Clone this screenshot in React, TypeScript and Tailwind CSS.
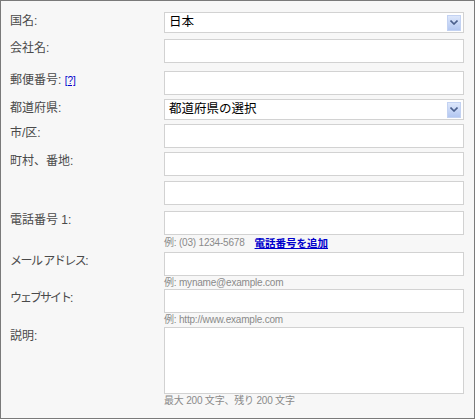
import React from 'react';

const font = "font-['Liberation_Sans','Noto_Sans_CJK_JP',sans-serif]";

const Chevron = () => (
  <span className="mr-[2px] flex h-[16px] w-[14px] items-center justify-center border border-[#c3d2f2] bg-gradient-to-b from-[#dde7fb] to-[#b3c7f1]">
    <svg width="8" height="5" viewBox="0 0 8 5">
      <path d="M0.5 0.5 L4 4 L7.5 0.5" fill="none" stroke="#4a5f8c" strokeWidth="1.6" />
    </svg>
  </span>
);

const Select = ({ value }: { value: string }) => (
  <div className="flex h-[21px] w-[300px] items-center justify-between border border-[#d2d2d2] bg-white pl-[4px] text-[12.5px] text-black">
    <span>{value}</span>
    <Chevron />
  </div>
);

const Input = () => <div className="h-[24px] w-[300px] border border-[#d2d2d2] bg-white" />;

const Hint = ({ children }: { children: React.ReactNode }) => (
  <div className="flex h-[13px] items-center text-[10px] leading-[13px] tracking-[-0.2px] text-[#8a8a8a]">
    {children}
  </div>
);

const Row = ({
  label,
  mt,
  children
}: {
  label?: React.ReactNode;
  mt: string;
  children: React.ReactNode;
}) => (
  <div className={`flex ${mt}`}>
    <div className="w-[163px] pl-[9px] text-[12px] leading-[18px] text-[#4a4a4a]">{label}</div>
    <div className="flex w-[300px] flex-col">{children}</div>
  </div>
);

export default function App() {
  return (
    <div className={`box-border h-[419px] w-[475px] border border-[#7a7a7a] bg-[#f7f7f7] ${font}`}>
      <Row label="国名:" mt="mt-[11px]">
        <Select value="日本" />
      </Row>
      <Row label="会社名:" mt="mt-[6px]">
        <Input />
      </Row>
      <Row
        mt="mt-[8px]"
        label={
          <span>
            郵便番号:{' '}
            <a href="#" className="text-[10px] text-[#0000cc] underline">
              [?]
            </a>
          </span>
        }
      >
        <Input />
      </Row>
      <Row label="都道府県:" mt="mt-[4px]">
        <Select value="都道府県の選択" />
      </Row>
      <Row label="市/区:" mt="mt-[4px]">
        <Input />
      </Row>
      <Row label="町村、番地:" mt="mt-[4px]">
        <Input />
      </Row>
      <Row mt="mt-[5px]">
        <Input />
      </Row>
      <Row label="電話番号 1:" mt="mt-[6px]">
        <Input />
        <div className="flex h-[15px] items-center gap-[10px]">
          <span className="text-[10px] tracking-[-0.2px] text-[#8a8a8a]">例: (03) 1234-5678</span>
          <a href="#" className="text-[10.5px] font-bold leading-[14px] text-[#0000cc] underline">
            電話番号を追加
          </a>
        </div>
      </Row>
      <Row label={<span className="tracking-[-1.5px]">メール アドレス:</span>} mt="mt-[2px]">
        <Input />
        <Hint>例: myname@example.com</Hint>
      </Row>
      <Row label={<span className="tracking-[-2px]">ウェブサイト:</span>} mt="mt-0">
        <Input />
        <Hint>例: http://www.example.com</Hint>
      </Row>
      <Row label="説明:" mt="mt-[1px]">
        <div className="h-[67px] w-[300px] border border-[#d2d2d2] bg-white" />
        <Hint>最大 200 文字、残り 200 文字</Hint>
      </Row>
    </div>
  );
}
